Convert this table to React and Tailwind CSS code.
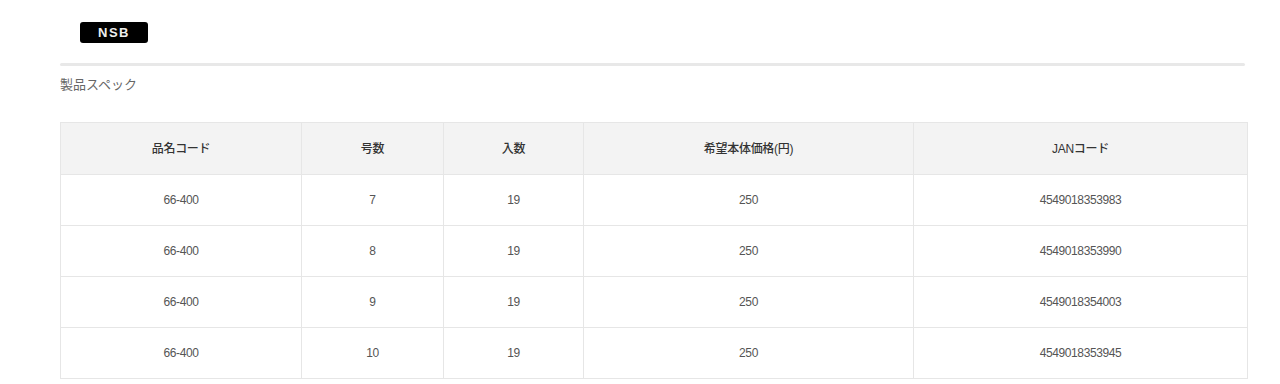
export default function App() {
  const rows = [
    ["66-400", "7", "19", "250", "4549018353983"],
    ["66-400", "8", "19", "250", "4549018353990"],
    ["66-400", "9", "19", "250", "4549018354003"],
    ["66-400", "10", "19", "250", "4549018353945"],
  ];
  const widths = ["w-[241px]", "w-[142px]", "w-[140px]", "w-[330px]", "w-[334px]"];
  const headers = ["品名コード", "号数", "入数", "希望本体価格(円)", "JANコード"];
  return (
    <div className="w-[1280px] h-[384px] bg-white overflow-hidden" style={{ fontFamily: '"Liberation Sans", "Noto Sans CJK JP", sans-serif' }}>
      <div className="pl-[60px] pr-[33px]">
        <div className="pt-[22px] pl-[20px]">
          <div className="w-[68px] h-[21px] bg-black rounded-[3px] flex items-center justify-center text-[#eee] text-[13px] font-bold tracking-[1.5px]">NSB</div>
        </div>
        <div className="mt-[20px] mr-[2px] h-[3px] bg-[#e8e8e8] rounded-full"></div>
        <div className="mt-[10px] text-[13px] text-[#666] leading-[18px]">製品スペック</div>
        <table className="mt-[28px] border-collapse table-fixed w-[1187px] text-[12px] text-[#555]">
          <thead>
            <tr className="bg-[#f3f3f3] h-[52px]">
              {headers.map((h, i) => (
                <th key={i} className={`${widths[i]} border border-[#e6e6e6] font-medium text-center text-[#333] tracking-[-0.3px]`}>{h}</th>
              ))}
            </tr>
          </thead>
          <tbody>
            {rows.map((r, ri) => (
              <tr key={ri} className="h-[51px]">
                {r.map((c, ci) => (
                  <td key={ci} className="border border-[#e6e6e6] text-center tracking-[-0.4px]">{c}</td>
                ))}
              </tr>
            ))}
          </tbody>
        </table>
      </div>
    </div>
  );
}
